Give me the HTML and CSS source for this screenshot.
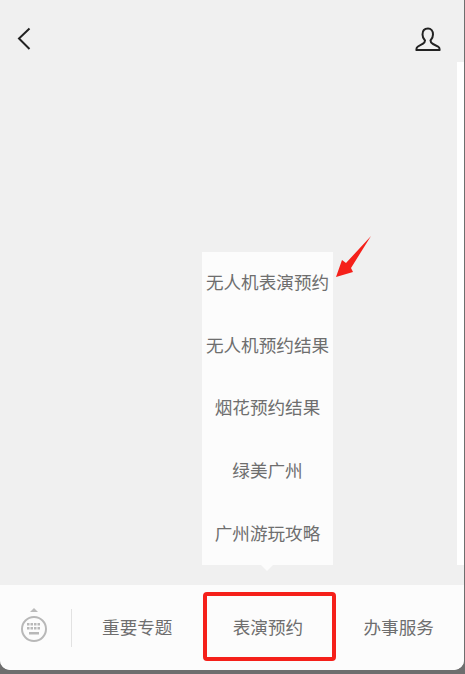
FILE: index.html
```html
<!DOCTYPE html>
<html lang="zh-CN">
<head>
    <meta charset="UTF-8">
    <meta name="viewport" content="width=device-width, initial-scale=1.0">
    <title>表演预约</title>
    <link rel="stylesheet" href="styles.css">
</head>
<body>
    <div class="phone">
        <header class="topbar">
            <svg class="icon-back" width="14" height="24" viewBox="0 0 14 24">
                <path d="M12.500 1.500 L2 11.500 L12.500 22" fill="none" stroke="#222" stroke-width="2"/>
            </svg>
            <svg class="icon-user" width="26" height="24" viewBox="0 0 26 24">
                <path d="M13 1.500c-3.500 0-5.500 2.500-5.500 6 0 2.500 1 4.500 2.500 6 0 2-.5 2.500-2.500 3.500L3 19.500C1.500 20.500 1.200 21.500 1.500 23H24.500C24.800 21.500 24.500 20.500 23 19.500L18 17c-2-1-2.500-1.500-2.500-3.500 1.500-1.500 2.500-3.500 2.500-6 0-3.500-2-6-5-6z" fill="none" stroke="#222" stroke-width="2"/>
            </svg>
        </header>

        <main class="content">
            <div class="popup-area">
                <ul class="popup">
                    <li>无人机表演预约</li>
                    <li>无人机预约结果</li>
                    <li>烟花预约结果</li>
                    <li>绿美广州</li>
                    <li>广州游玩攻略</li>
                </ul>
                <svg class="red-arrow" width="40" height="46" viewBox="0 0 40 46">
                    <path d="M38 0 L13 27 L9 24 L3 41 L20 36 L18 32 Z" fill="#f5201a"/>
                </svg>
            </div>
            <div class="side-strip"></div>
        </main>

        <nav class="menu">
            <div class="menu-switch">
                <svg width="28" height="42" viewBox="0 0 28 42">
                    <path d="M14 1 L18 5 H10 Z" fill="#bbb"/>
                    <circle cx="14" cy="22" r="12" fill="none" stroke="#b8b8b8" stroke-width="2"/>
                    <g fill="#b8b8b8">
                        <rect x="7" y="16" width="2.500" height="2.500"/>
                        <rect x="10.500" y="16" width="2.500" height="2.500"/>
                        <rect x="14" y="16" width="2.500" height="2.500"/>
                        <rect x="17.500" y="16" width="2.500" height="2.500"/>
                        <rect x="7" y="20" width="2.500" height="2.500"/>
                        <rect x="10.500" y="20" width="2.500" height="2.500"/>
                        <rect x="14" y="20" width="2.500" height="2.500"/>
                        <rect x="17.500" y="20" width="2.500" height="2.500"/>
                        <rect x="9" y="25" width="10" height="2.500"/>
                    </g>
                </svg>
            </div>
            <a class="menu-item">重要专题</a>
            <a class="menu-item marked">表演预约</a>
            <a class="menu-item">办事服务</a>
        </nav>
    </div>
</body>
</html>
```

FILE: styles.css
```css
html, body {
    margin: 0;
    height: 100%;
    background-color: #6e6e6e;
    overflow: hidden;
}
body {
    font-family: "Noto Sans CJK SC", "Liberation Sans", sans-serif;
}
.phone {
    width: 464px;
    height: 670px;
    background-color: #f0f0f0;
    border-radius: 0 0 10px 10px;
    overflow: hidden;
    display: flex;
    flex-direction: column;
}
.topbar {
    height: 62px;
    display: flex;
    justify-content: space-between;
    align-items: flex-start;
    box-sizing: border-box;
    padding: 27px 23px 0 17px;
}
.content {
    flex: 1;
    display: flex;
    min-height: 0;
}
.popup-area {
    flex: 1;
    position: relative;
}
.side-strip {
    width: 7px;
    height: 503px;
    background-color: #fff;
}
.popup {
    list-style: none;
    margin: 190px 0 0 202px;
    padding: 0;
    width: 131px;
    height: 313px;
    background-color: #fcfcfc;
    position: relative;
    display: flex;
    flex-direction: column;
}
.popup::after {
    content: "";
    position: absolute;
    left: 59px;
    bottom: -6px;
    border-left: 6px solid transparent;
    border-right: 6px solid transparent;
    border-top: 6px solid #fcfcfc;
}
.popup li {
    flex: 1;
    display: flex;
    align-items: center;
    justify-content: center;
    padding-bottom: 3px;
    font-size: 17.6px;
    color: #6e6e6e;
    white-space: nowrap;
}
.red-arrow {
    position: absolute;
    left: 333px;
    top: 174px;
}
.menu {
    height: 85px;
    background-color: #fcfcfc;
    display: flex;
    align-items: center;
}
.menu-switch {
    width: 72px;
    height: 38px;
    box-sizing: border-box;
    border-right: 1px solid #e2e2e2;
    display: flex;
    align-items: center;
    padding-left: 20px;
}
.menu-item {
    width: 131px;
    height: 100%;
    box-sizing: border-box;
    padding-bottom: 3px;
    display: flex;
    align-items: center;
    justify-content: center;
    font-size: 17.6px;
    color: #6e6e6e;
    position: relative;
}
.marked::after {
    content: "";
    position: absolute;
    left: 0;
    top: 7px;
    width: 133px;
    height: 69px;
    box-sizing: border-box;
    border: 4px solid #f5201a;
    border-radius: 4px;
}
```
